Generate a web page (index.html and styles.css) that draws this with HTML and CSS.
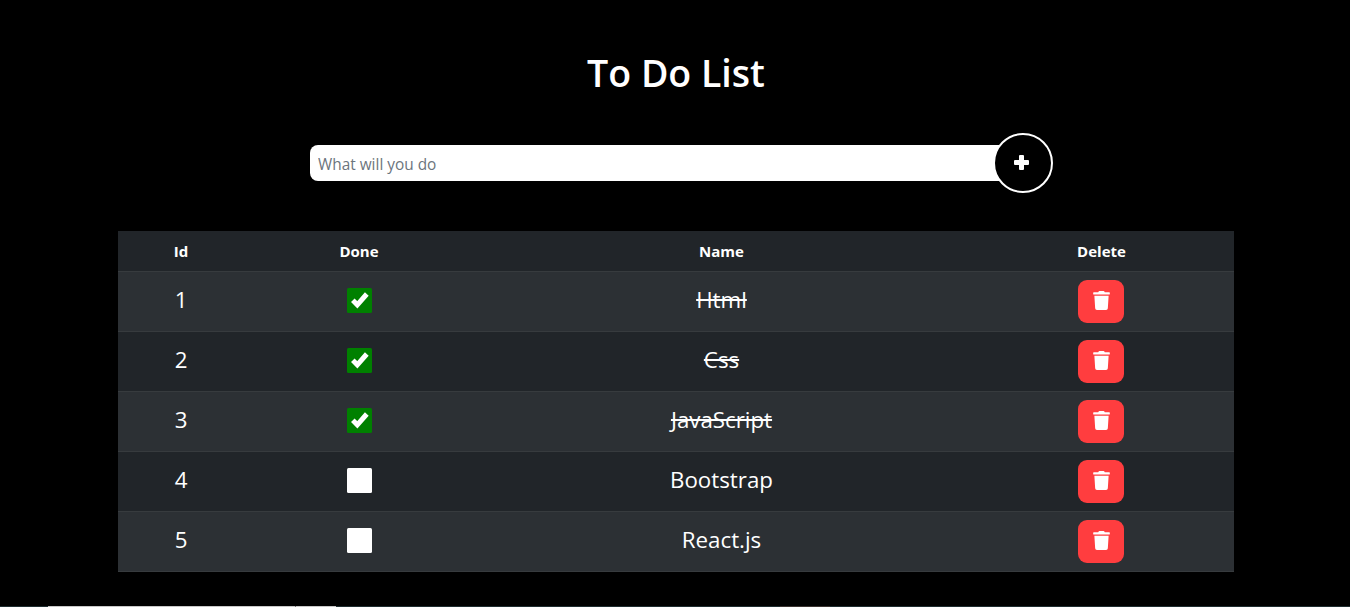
FILE: index.html
```html
<!DOCTYPE html>
<html lang="en">
<head>
<meta charset="utf-8">
<title>To Do List</title>
<link rel="stylesheet" href="styles.css">
</head>
<body>
<main class="app">
  <h1 class="title">To Do List</h1>
  <form class="add-form">
    <input class="add-input" type="text" placeholder="What will you do">
    <button class="add-btn" type="button" aria-label="Add">
      <svg class="plus" viewBox="0 0 15 15"><path fill="currentColor" d="M6 0h3a1 1 0 0 1 1 1v4h4a1 1 0 0 1 1 1v3a1 1 0 0 1-1 1h-4v4a1 1 0 0 1-1 1H6a1 1 0 0 1-1-1v-4H1a1 1 0 0 1-1-1V6a1 1 0 0 1 1-1h4V1a1 1 0 0 1 1-1z"/></svg>
    </button>
  </form>
  <table class="todo">
    <thead>
      <tr><th class="c-id">Id</th><th class="c-done">Done</th><th class="c-name">Name</th><th class="c-del">Delete</th></tr>
    </thead>
    <tbody>
      <tr>
        <td>1</td>
        <td><span class="box on"><svg viewBox="0 0 25 25"><path d="M5.800 12.300 10.300 16.800 19.800 6" fill="none" stroke="#fff" stroke-width="5"/></svg></span></td>
        <td class="struck">Html</td>
        <td><button class="del" type="button" aria-label="Delete"><svg viewBox="0 0 448 512"><path fill="currentColor" d="M432 32H312l-9.400-18.700A24 24 0 0 0 281.100 0H166.800a23.720 23.720 0 0 0-21.400 13.300L136 32H16A16 16 0 0 0 0 48v32a16 16 0 0 0 16 16h416a16 16 0 0 0 16-16V48a16 16 0 0 0-16-16zM53.200 467a48 48 0 0 0 47.900 45h245.800a48 48 0 0 0 47.900-45L416 128H32z"/></svg></button></td>
      </tr>
      <tr>
        <td>2</td>
        <td><span class="box on"><svg viewBox="0 0 25 25"><path d="M5.800 12.300 10.300 16.800 19.800 6" fill="none" stroke="#fff" stroke-width="5"/></svg></span></td>
        <td class="struck">Css</td>
        <td><button class="del" type="button" aria-label="Delete"><svg viewBox="0 0 448 512"><path fill="currentColor" d="M432 32H312l-9.400-18.700A24 24 0 0 0 281.100 0H166.800a23.720 23.720 0 0 0-21.400 13.300L136 32H16A16 16 0 0 0 0 48v32a16 16 0 0 0 16 16h416a16 16 0 0 0 16-16V48a16 16 0 0 0-16-16zM53.200 467a48 48 0 0 0 47.900 45h245.800a48 48 0 0 0 47.900-45L416 128H32z"/></svg></button></td>
      </tr>
      <tr>
        <td>3</td>
        <td><span class="box on"><svg viewBox="0 0 25 25"><path d="M5.800 12.300 10.300 16.800 19.800 6" fill="none" stroke="#fff" stroke-width="5"/></svg></span></td>
        <td class="struck">JavaScript</td>
        <td><button class="del" type="button" aria-label="Delete"><svg viewBox="0 0 448 512"><path fill="currentColor" d="M432 32H312l-9.400-18.700A24 24 0 0 0 281.100 0H166.800a23.720 23.720 0 0 0-21.400 13.300L136 32H16A16 16 0 0 0 0 48v32a16 16 0 0 0 16 16h416a16 16 0 0 0 16-16V48a16 16 0 0 0-16-16zM53.200 467a48 48 0 0 0 47.900 45h245.800a48 48 0 0 0 47.900-45L416 128H32z"/></svg></button></td>
      </tr>
      <tr>
        <td>4</td>
        <td><span class="box"></span></td>
        <td>Bootstrap</td>
        <td><button class="del" type="button" aria-label="Delete"><svg viewBox="0 0 448 512"><path fill="currentColor" d="M432 32H312l-9.400-18.700A24 24 0 0 0 281.100 0H166.800a23.720 23.720 0 0 0-21.400 13.300L136 32H16A16 16 0 0 0 0 48v32a16 16 0 0 0 16 16h416a16 16 0 0 0 16-16V48a16 16 0 0 0-16-16zM53.200 467a48 48 0 0 0 47.900 45h245.800a48 48 0 0 0 47.900-45L416 128H32z"/></svg></button></td>
      </tr>
      <tr>
        <td>5</td>
        <td><span class="box"></span></td>
        <td>React.js</td>
        <td><button class="del" type="button" aria-label="Delete"><svg viewBox="0 0 448 512"><path fill="currentColor" d="M432 32H312l-9.400-18.700A24 24 0 0 0 281.100 0H166.800a23.720 23.720 0 0 0-21.400 13.300L136 32H16A16 16 0 0 0 0 48v32a16 16 0 0 0 16 16h416a16 16 0 0 0 16-16V48a16 16 0 0 0-16-16zM53.200 467a48 48 0 0 0 47.900 45h245.800a48 48 0 0 0 47.900-45L416 128H32z"/></svg></button></td>
      </tr>
    </tbody>
  </table>
</main>
<div class="edge-strip">
  <span class="s-dark s-a"></span>
  <span class="s-light s-b"></span>
  <span class="s-tick"></span>
  <span class="s-light s-c"></span>
  <span class="s-dark s-d"></span>
  <span class="s-brown"></span>
  <span class="s-dark s-e"></span>
</div>
</body>
</html>
```
FILE: styles.css
```css
* { box-sizing: border-box; }
html, body { height: 100%; }
body {
  margin: 0;
  background: #000;
  color: #fff;
  font-family: "Open Sans", "Noto Sans", sans-serif;
  overflow: hidden;
}
.app {
  width: 1116px;
  margin-left: 118px;
  padding-top: 49px;
}
.title {
  margin: 0;
  height: 48px;
  font-size: 37.5px;
  line-height: 48px;
  font-weight: 600;
  text-align: center;
}
.add-form {
  display: flex;
  align-items: center;
  margin-top: 36px;
  margin-left: 192px;
}
.add-input {
  width: 698px;
  height: 36px;
  border: 0;
  border-radius: 8px 0 0 8px;
  padding: 3px 8px 0;
  background: #fff;
  font: 15.4px "Open Sans", "Noto Sans", sans-serif;
  color: #333;
  outline: 0;
}
.add-input::placeholder { color: #6c757d; opacity: 1; }
.add-btn {
  width: 60px;
  height: 60px;
  margin-left: -15px;
  flex: none;
  display: flex;
  align-items: center;
  justify-content: center;
  background: #000;
  color: #fff;
  border: 2px solid #fff;
  border-radius: 50%;
  padding: 0 3px 1px 0;
}
.plus { width: 15px; height: 15px; display: block; }
.todo {
  width: 1116px;
  margin-top: 38px;
  table-layout: fixed;
  border-collapse: collapse;
  background: #212529;
  text-align: center;
}
.c-id { width: 126px; }
.c-done { width: 230px; }
.c-name { width: 495px; }
.c-del { width: 265px; }
th {
  height: 40px;
  padding: 0;
  font-size: 15px;
  font-weight: 700;
  border-bottom: 1px solid #373b3e;
}
td {
  height: 60px;
  padding: 0 0 3px;
  font-size: 22.3px;
  font-weight: 400;
  border-bottom: 1px solid #373b3e;
  vertical-align: middle;
}
tbody tr:nth-child(odd) { background: #2c3034; }
.struck { text-decoration: line-through; }
.box {
  display: block;
  width: 25px;
  height: 25px;
  margin: 1px auto 0;
  background: #fff;
  border-radius: 1.500px;
}
.box.on { background: #008000; }
.box svg { display: block; width: 25px; height: 25px; }
.del {
  display: block;
  width: 46px;
  height: 43px;
  margin: 3px 0 0 109px;
  padding: 0 0 2px;
  border: 0;
  border-radius: 9px;
  background: #ff3d3f;
  color: #fff;
}
.del svg { display: block; width: 17px; height: 19px; margin: 0 auto; }
.edge-strip {
  position: fixed;
  left: 0;
  right: 0;
  bottom: 0;
  height: 1px;
  display: flex;
}
.s-dark { background: #1f2d30; }
.s-light { background: #c8c8c8; }
.s-tick { width: 1px; background: #6e6e6e; }
.s-brown { width: 50px; background: #3a3330; }
.s-a { width: 48px; }
.s-b { width: 247px; }
.s-c { width: 40px; }
.s-d { width: 444px; }
.s-e { flex: 1; }
```
